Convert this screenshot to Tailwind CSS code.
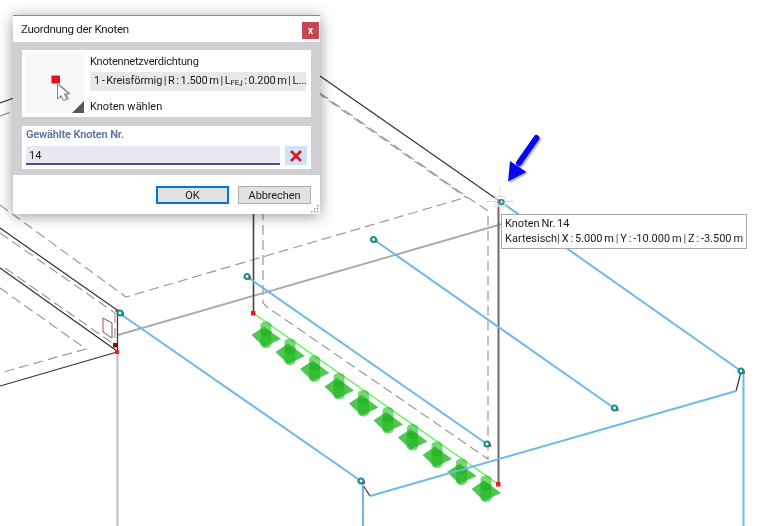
<!DOCTYPE html>
<html lang="de">
<head>
<meta charset="utf-8">
<title>Zuordnung der Knoten</title>
<script src="https://cdn.jsdelivr.net/npm/@tailwindcss/browser@4"></script>
</head>
<body class="bg-white">
<div class="relative w-[760px] h-[526px] overflow-hidden bg-white blur-[0.35px] font-['Roboto','Noto_Sans',sans-serif] text-[#1a1a1a]">
  <!-- free canvas: the 3D model drawing -->
  <svg class="absolute inset-0" width="760" height="526" viewBox="0 0 760 526" fill="none">
    <defs>
      <g id="support">
        <path d="M-14.500 0 L-2 -8.500 L15 4 L-2 12 Z" fill="#45c445" fill-opacity="0.95"/>
        <path d="M-5.500 -10 A5.500 3.500 0 0 1 5.500 -10 L5.500 9.500 A5.500 3.500 0 0 1 -5.500 9.500 Z" fill="#22b822" fill-opacity="0.6"/>
        <ellipse cx="0" cy="-2" rx="5.500" ry="3.500" fill="#0fa80f" fill-opacity="0.35"/>
      </g>
      <g id="node">
        <rect x="0.5" y="-0.5" width="3.5" height="3.5" fill="#ff3030"/>
        <circle cx="0" cy="0" r="2.500" fill="#fff" stroke="#0f8f8f" stroke-width="2.200"/>
      </g>
    </defs>

    <!-- grey dashed -->
    <g stroke="#9a9a9a" stroke-width="1.2" stroke-dasharray="10 5">
      <path d="M0 205 L126 297 L467 197"/>
      <path d="M467 197 L488 211 L488 459 L267 307 L263 303 L263 213"/>
      <path d="M0 233 L115 313"/>
      <path d="M5 268 L115 345"/>
      <path d="M0 288 L86 349 L0 373"/>
      <path d="M115 313 L115 345"/>
      <path d="M320 93 L467 197"/>
      <path d="M320 94.5 L467 198" stroke-dashoffset="4"/>
      <path d="M0 116 L11 112"/>
    </g>

    <!-- grey solid -->
    <g stroke="#ababab" stroke-width="2">
      <path d="M118 335 L502 224"/>
      <path d="M117.500 352 L117.500 526" stroke="#bcbcbc"/>
    </g>

    <!-- black solid -->
    <g stroke="#333" stroke-width="1.2">
      <path d="M320 76 L498 200"/>
      <path d="M0 103 L14 98"/>
      <path d="M0 228 L117 310"/>
      <path d="M0 268 L117 351"/>
      <path d="M117 352 L0 386"/>
      <path d="M117.500 311 L117.500 352"/>
      <path d="M361 482 L370 496"/>
      <path d="M741 372 L736 391"/>
    </g>
    <path d="M253.500 213 L253.500 313" stroke="#444" stroke-width="1.6"/>
    <path d="M498.500 200 L498.500 484" stroke="#6a6a6a" stroke-width="2"/>

    <!-- member detail -->
    <path d="M103 318 L112 323 L112 338 L103 332 Z" stroke="#a84a4a" stroke-width="1" fill="#fff"/>
    <rect x="113" y="343" width="4.500" height="4.500" fill="#7a1414"/>

    <!-- green edge and supports -->
    <path d="M253 313 L498 484" stroke="#4dfb3a" stroke-width="1.2"/>
    <use href="#support" x="266" y="335"/>
    <use href="#support" x="290" y="352"/>
    <use href="#support" x="314.500" y="369"/>
    <use href="#support" x="339" y="386.500"/>
    <use href="#support" x="363.500" y="403.500"/>
    <use href="#support" x="388" y="420.500"/>
    <use href="#support" x="412.500" y="437.500"/>
    <use href="#support" x="437" y="455"/>
    <use href="#support" x="461.500" y="472"/>
    <use href="#support" x="486" y="489"/>

    <!-- blue lines -->
    <g stroke="#6cb9ea" stroke-width="2">
      <path d="M119 313 L361 481"/>
      <path d="M246 276 L487 444"/>
      <path d="M373 239 L614 408"/>
      <path d="M501 202 L741 371"/>
      <path d="M370 496 L736 391"/>
      <path d="M363 483 L363 526"/>
      <path d="M743.500 373 L743.500 526"/>
    </g>

    <!-- red nodes -->
    <g fill="#f41a1a">
      <rect x="251" y="311" width="4.500" height="4.500"/>
      <rect x="496" y="482" width="4.500" height="4.500"/>
      <rect x="115" y="350" width="4" height="4"/>
      <rect x="115.500" y="309" width="3" height="3"/>
    </g>

    <!-- teal nodes -->
    <use href="#node" x="120" y="313"/>
    <use href="#node" x="361" y="481"/>
    <use href="#node" x="247" y="276.500"/>
    <use href="#node" x="487" y="444"/>
    <use href="#node" x="373.500" y="239.500"/>
    <use href="#node" x="614.500" y="408"/>
    <use href="#node" x="741" y="371"/>

    <!-- crosshair on picked node -->
    <path d="M500 187 L500 196 M500 206 L500 214 M486 201.500 L495 201.500 M505 201.500 L514 201.500" stroke="#d8d8d8" stroke-width="1"/>
    <rect x="495" y="196.500" width="10" height="10" fill="#fff" fill-opacity="0.55" stroke="#ddd"/>
    <rect x="497" y="199" width="4" height="4" fill="#f77"/>
    <circle cx="501.500" cy="202" r="2.300" stroke="#0f8f8f" stroke-width="1.600"/>

    <!-- blue arrow -->
    <g opacity="0.25" transform="translate(1.500 2)">
      <path d="M536.500 138 L519 163" stroke="#000" stroke-width="6" stroke-linecap="round"/>
      <path d="M508 181.500 L510.500 161.500 L526 171.500 Z" fill="#000"/>
    </g>
    <path d="M536.500 138 L519 163" stroke="#0808ee" stroke-width="6" stroke-linecap="round"/>
    <path d="M508 181.500 L510 161 L526.500 172 Z" fill="#0808ee"/>
  </svg>

  <!-- tooltip -->
  <div class="absolute left-[501px] top-[214px] w-[246px] h-[35px] border border-[#a8a8a8] bg-white pl-[3px] pt-[1px] text-[11px] leading-[15px] whitespace-nowrap [word-spacing:-0.9px]">
    <div>Knoten Nr. 14</div>
    <div>Kartesisch<span class="text-[#7a2a7a]">|</span> X : 5.000 m <span class="text-[#7a2a7a]">|</span> Y : -10.000 m <span class="text-[#7a2a7a]">|</span> Z : -3.500 m</div>
  </div>

  <!-- dialog -->
  <div class="absolute left-[13px] top-[15px] w-[307px] h-[199px] flex flex-col bg-white border-t border-[#8a8a8a] shadow-[0_2px_14px_rgba(0,0,0,0.4)] text-[11px]">
    <div class="h-[26px] flex items-center justify-between pl-[8px] pr-[1px]">
      <span class="mt-[2px] text-[11.500px] tracking-[-0.3px]">Zuordnung der Knoten</span>
      <span class="w-[17px] h-[17px] mt-[3px] bg-[#c4484f] text-white text-[10px] font-bold flex items-center justify-center leading-none">x</span>
    </div>
    <div class="h-[133px] bg-[#cfcfd4] px-[9px] pt-[8px] flex flex-col gap-[9px]">
      <div class="h-[67px] bg-white py-[4px] pl-[4px] pr-[5px] flex gap-[6px]">
        <div class="w-[58px] h-[59px] bg-[#f7f7f7] shrink-0">
          <svg width="58" height="59" viewBox="26 54 58 59" fill="none">
            <path d="M59.500 84 L59.500 99 L63 95.500 L65.500 100.500 L69 99 L66.500 94 L71 94 Z" fill="#555" fill-opacity="0.55"/>
            <rect x="51.500" y="75.500" width="8.500" height="8" fill="#e0141e"/>
            <path d="M57.500 84 L57.500 99 L61 95.500 L63.500 100.500 L67 99 L64.500 94 L69 94 Z" fill="#fff" stroke="#777" stroke-width="0.9"/>
            <path d="M72 113 L84 113 L84 101 Z" fill="#585858"/>
          </svg>
        </div>
        <div class="flex-1 min-w-0 flex flex-col">
          <div class="h-[18px] shrink-0 leading-[16px] tracking-[-0.2px]">Knotennetzverdichtung</div>
          <div class="h-[19px] shrink-0 bg-[#e8e8e8] pl-[4px] flex items-center whitespace-nowrap tracking-[-0.1px] [word-spacing:-1px]">1 - Kreisförmig | R : 1.500 m | L<span class="text-[8px] relative top-[1px]">FE,j</span>&nbsp;: 0.200 m | L...</div>
          <div class="mt-[7px] h-[18px] shrink-0 leading-[18px]">Knoten wählen</div>
        </div>
      </div>
      <div class="h-[43px] bg-white px-[4px] flex flex-col">
        <div class="h-[20px] leading-[18px] font-semibold text-[#5f6f9e] tracking-[-0.15px]">Gewählte Knoten Nr.</div>
        <div class="flex gap-[5px]">
          <div class="w-[254px] h-[19px] bg-[#e8e8f2] border-b-2 border-[#4a4a9e] pl-[3px] leading-[20px]">14</div>
          <div class="w-[22px] h-[19px] bg-[#cce4f7] flex items-center justify-center">
            <svg width="12" height="12" viewBox="0 0 12 12" fill="none"><path d="M1 1 L11 11 M11 1 L1 11" stroke="#e8101a" stroke-width="2.600"/></svg>
          </div>
        </div>
      </div>
    </div>
    <div class="relative flex-1 flex justify-end gap-[9px] pr-[9px] pt-[11px]">
      <button class="w-[73px] h-[18px] border-2 border-[#0078d7] bg-[#e1e1e1] flex items-center justify-center leading-none">OK</button>
      <button class="w-[73px] h-[18px] border border-[#adadad] bg-[#e1e1e1] flex items-center justify-center leading-none tracking-[-0.1px]">Abbrechen</button>
      <svg class="absolute right-[1px] bottom-[1px]" width="8" height="8" viewBox="0 0 8 8" fill="#9a9a9a"><rect x="6" y="0" width="1.500" height="1.500"/><rect x="3" y="3" width="1.500" height="1.500"/><rect x="6" y="3" width="1.500" height="1.500"/><rect x="0" y="6" width="1.500" height="1.500"/><rect x="3" y="6" width="1.500" height="1.500"/><rect x="6" y="6" width="1.500" height="1.500"/></svg>
    </div>
  </div>
</div>
</body>
</html>
